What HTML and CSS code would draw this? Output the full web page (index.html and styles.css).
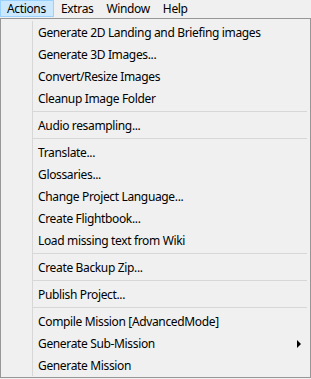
FILE: index.html
```html
<!DOCTYPE html>
<html lang="en">
<head>
    <meta charset="UTF-8">
    <title>Actions Menu</title>
    <link rel="stylesheet" href="styles.css">
</head>
<body>
    <div class="menubar">
        <div class="menubar-item open">Actions</div>
        <div class="menubar-item">Extras</div>
        <div class="menubar-item">Window</div>
        <div class="menubar-item">Help</div>
    </div>
    <div class="popup">
        <div class="menu-list">
            <div class="menu-item">Generate 2D Landing and Briefing images</div>
            <div class="menu-item">Generate 3D Images...</div>
            <div class="menu-item">Convert/Resize Images</div>
            <div class="menu-item">Cleanup Image Folder</div>
            <div class="separator"></div>
            <div class="menu-item">Audio resampling...</div>
            <div class="separator"></div>
            <div class="menu-item">Translate...</div>
            <div class="menu-item">Glossaries...</div>
            <div class="menu-item">Change Project Language...</div>
            <div class="menu-item">Create Flightbook...</div>
            <div class="menu-item">Load missing text from Wiki</div>
            <div class="separator"></div>
            <div class="menu-item">Create Backup Zip...</div>
            <div class="separator"></div>
            <div class="menu-item">Publish Project...</div>
            <div class="separator"></div>
            <div class="menu-item">Compile Mission [AdvancedMode]</div>
            <div class="menu-item has-sub">Generate Sub-Mission <span class="arrow"></span></div>
            <div class="menu-item">Generate Mission</div>
        </div>
    </div>
</body>
</html>
```

FILE: styles.css
```css
/* Base */
* {
    box-sizing: border-box;
    margin: 0;
    padding: 0;
}
body {
    font-family: "Noto Sans", "Open Sans", sans-serif;
    font-size: 12px;
    letter-spacing: -0.35px;
    color: #000;
    background-color: #f0f0f0;
    width: 311px;
    height: 379px;
    overflow: hidden;
}
/* Menu bar */
.menubar {
    display: flex;
    height: 18px;
    background-color: #f0f0f0;
}
.menubar-item {
    height: 17px;
    line-height: 15px;
    padding: 0 5px 0 6px;
    border: 1px solid transparent;
}
.menubar-item.open {
    background-color: #cce8ff;
    border-color: #99d1ff;
    width: 54px;
}
/* Popup */
.popup {
    width: 311px;
    border: 1px solid #979797;
    background-color: #f0f0f0;
    padding: 2px 2px 1px 2px;
}
.menu-list {
    background-image: linear-gradient(to right, transparent 29px, #d7d7d7 29px, #d7d7d7 30px, transparent 30px);
}
.menu-item {
    display: flex;
    align-items: center;
    height: 22px;
    padding-left: 35px;
    padding-right: 7px;
    padding-top: 1px;
    white-space: nowrap;
}
.menu-item.has-sub {
    justify-content: space-between;
}
.arrow {
    width: 0;
    height: 0;
    border-top: 4px solid transparent;
    border-bottom: 4px solid transparent;
    border-left: 4px solid #000;
}
.separator {
    height: 5px;
    margin-left: 30px;
    margin-right: 1px;
    padding-top: 2px;
}
.separator::after {
    content: "";
    display: block;
    height: 1px;
    background-color: #d7d7d7;
}
```
